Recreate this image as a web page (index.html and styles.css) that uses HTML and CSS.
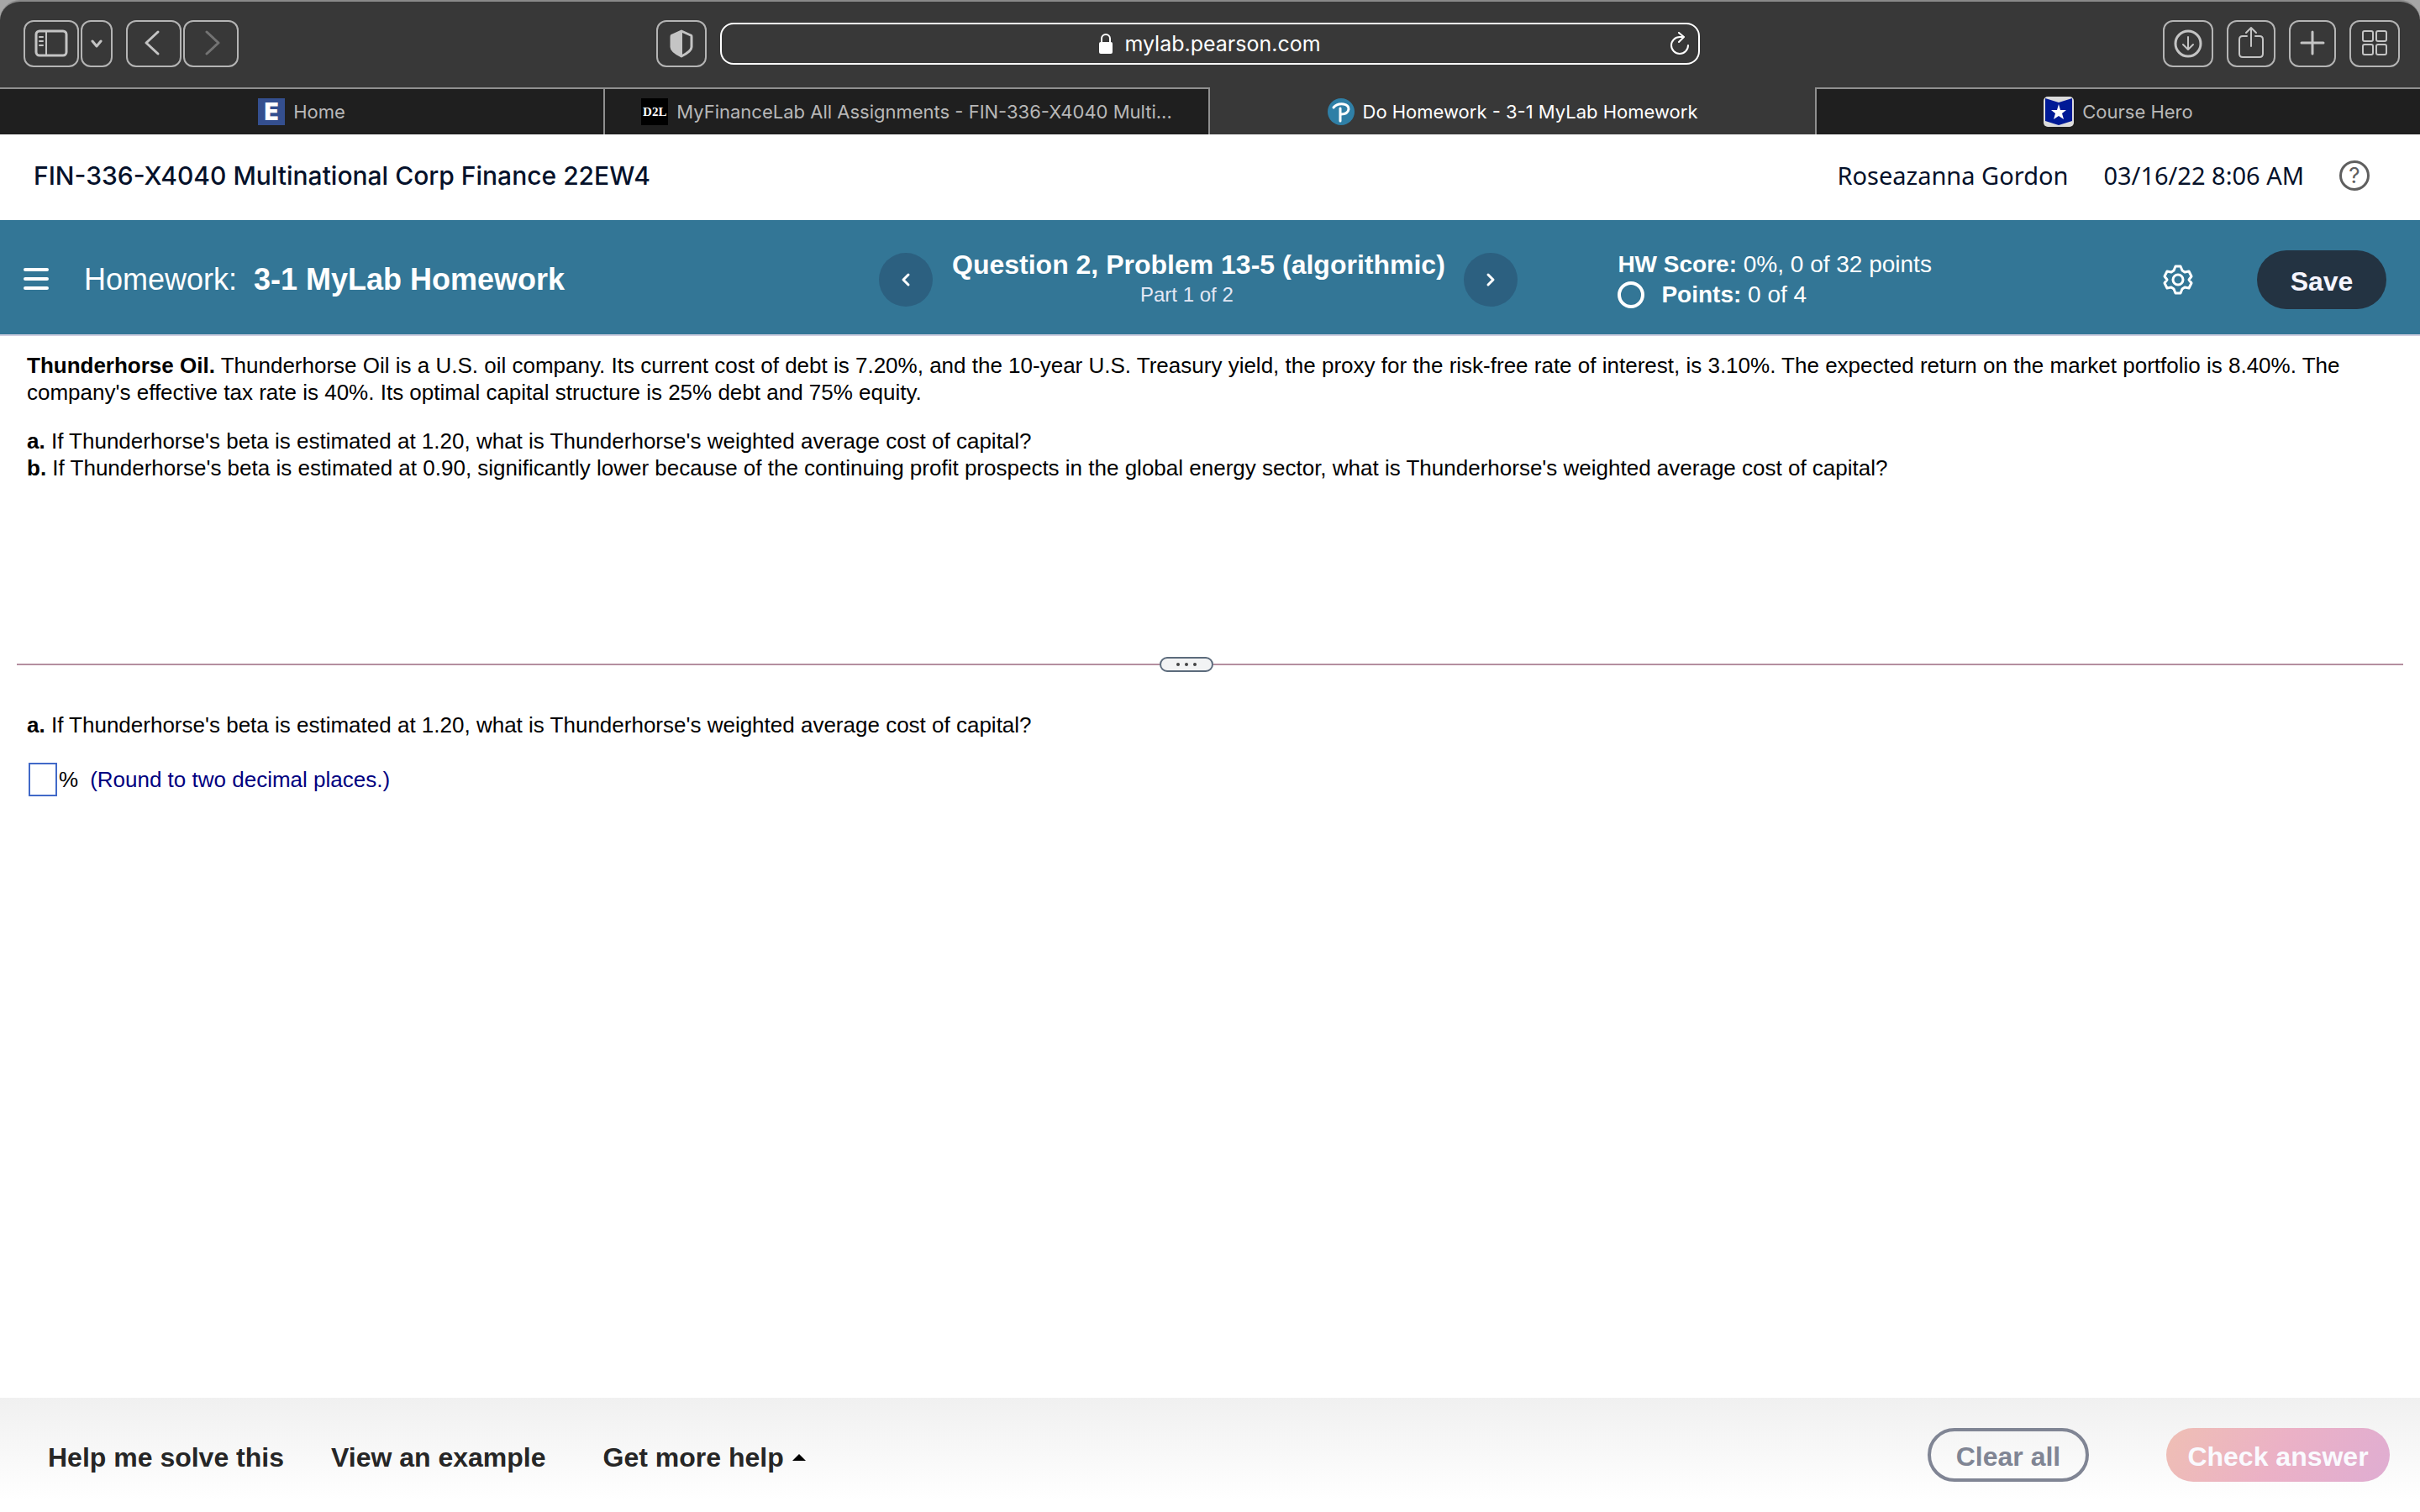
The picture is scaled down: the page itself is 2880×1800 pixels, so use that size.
FILE: index.html
```html
<!DOCTYPE html>
<html lang="en">
  <head>
    <meta charset="UTF-8" />
    <meta name="viewport" content="width=device-width, initial-scale=1.0" />
    <title>Do Homework - 3-1 MyLab Homework</title>
    <link rel="stylesheet" href="styles.css">
  </head>
  <body>
    <!-- Browser window -->
    <div class="browser">
      <div class="toolbar">
        <div class="toolbar-left">
          <div class="btn-pair">
            <button class="tool-btn" type="button" aria-label="Sidebar">
              <svg width="42" height="34" viewBox="0 0 42 34" fill="none" stroke="#c4c4c4" stroke-width="3">
                <rect x="3" y="2" width="36" height="29" rx="4" />
                <path d="M15 2v29" stroke-width="2" />
                <path d="M7 9h4M7 14h4M7 19h4" stroke-width="2" stroke-linecap="round" />
              </svg>
            </button>
            <button class="tool-btn" type="button" aria-label="Tab groups">
              <svg width="14" height="34" viewBox="0 0 14 34" fill="none" stroke="#c4c4c4" stroke-width="3" stroke-linecap="round" stroke-linejoin="round">
                <path d="M2 14l5 6l5-6" />
              </svg>
            </button>
          </div>
          <div class="btn-pair">
            <button class="tool-btn" type="button" aria-label="Back">
              <svg width="42" height="34" viewBox="0 0 42 34" fill="none" stroke="#c4c4c4" stroke-width="3" stroke-linecap="round" stroke-linejoin="round">
                <path d="M26 3L12 16l14 13" />
              </svg>
            </button>
            <button class="tool-btn" type="button" aria-label="Forward">
              <svg width="42" height="34" viewBox="0 0 42 34" fill="none" stroke="#737373" stroke-width="3" stroke-linecap="round" stroke-linejoin="round">
                <path d="M16 3l14 13l-14 13" />
              </svg>
            </button>
          </div>
          <button class="tool-btn shield" type="button" aria-label="Privacy report">
            <svg width="36" height="36" viewBox="0 0 36 36" fill="none" stroke="#c4c4c4" stroke-width="3" stroke-linejoin="round">
              <path d="M18 3l11 5q1 0 1 2v12q0 5-12 11q-12-6-12-11v-12q0-2 1-2z" />
              <path d="M18 3v30q-12-6-12-11v-12q0-2 1-2z" fill="#c4c4c4" stroke="none" />
              <path d="M18 3v30" stroke-width="2" />
            </svg>
          </button>
        </div>

        <div class="address">
          <div class="address-text">
            <svg width="16" height="26" viewBox="0 0 16 26" fill="none">
              <rect x="0" y="11" width="16" height="14" rx="2" fill="#fff" />
              <path d="M3 12V7a5 5 0 0 1 10 0v5" stroke="#fff" stroke-width="2" />
            </svg>
            <input class="address-input" type="text" value="mylab.pearson.com" aria-label="Address" />
          </div>
          <button class="reload" type="button" aria-label="Reload">
            <svg width="24" height="28" viewBox="0 0 24 28" fill="none" stroke="#fff" stroke-width="2" stroke-linecap="round" stroke-linejoin="round">
              <path d="M15 6h-3a10 10 0 1 0 10 10" />
              <path d="M11 1l6 5l-6 6" />
            </svg>
          </button>
        </div>

        <div class="toolbar-right">
          <button class="tool-btn" type="button" aria-label="Downloads">
            <svg width="36" height="36" viewBox="0 0 36 36" fill="none" stroke="#c4c4c4" stroke-linecap="round" stroke-linejoin="round">
              <circle cx="18" cy="18" r="15" stroke-width="3" />
              <path d="M18 10v15M12 19l6 6l6-6" stroke-width="2" />
            </svg>
          </button>
          <button class="tool-btn" type="button" aria-label="Share">
            <svg width="34" height="44" viewBox="0 0 34 44" fill="none" stroke="#c4c4c4" stroke-width="2" stroke-linecap="round" stroke-linejoin="round">
              <path d="M12 13H7q-4 0-4 4v17q0 4 4 4h20q4 0 4-4V17q0-4-4-4h-5" />
              <path d="M17 25V3M11 9l6-6l6 6" />
            </svg>
          </button>
          <button class="tool-btn" type="button" aria-label="New tab">
            <svg width="32" height="34" viewBox="0 0 32 34" fill="none" stroke="#c4c4c4" stroke-width="3" stroke-linecap="round">
              <path d="M16 3v26M3 16h26" />
            </svg>
          </button>
          <button class="tool-btn" type="button" aria-label="Tab overview">
            <svg width="36" height="36" viewBox="0 0 36 36" fill="none" stroke="#c4c4c4" stroke-width="2">
              <rect x="4" y="3" width="12" height="12" rx="2" />
              <rect x="20" y="3" width="12" height="12" rx="2" />
              <rect x="4" y="19" width="12" height="12" rx="2" />
              <rect x="20" y="19" width="12" height="12" rx="2" />
            </svg>
          </button>
        </div>
      </div>

      <nav class="tabs">
        <a class="tab" href="#"><span class="favicon favicon-e">E</span><span class="tab-title">Home</span></a>
        <a class="tab" href="#"><span class="favicon favicon-d2l">D2L</span><span class="tab-title">MyFinanceLab All Assignments - FIN-336-X4040 Multi...</span></a>
        <a class="tab active" href="#">
          <svg width="32" height="32" viewBox="0 0 32 32" fill="none" stroke="#fff" stroke-width="3" stroke-linecap="round">
            <circle cx="16" cy="16" r="16" fill="#2f7fa6" stroke="none" />
            <path d="M7 11q4-5 12-4q6 1 6 6q-1 6-9 6" />
            <path d="M15 12v15" />
          </svg>
          <span class="tab-title">Do Homework - 3-1 MyLab Homework</span>
        </a>
        <a class="tab" href="#">
          <svg width="36" height="36" viewBox="0 0 36 36">
            <rect width="36" height="36" rx="5" fill="#dcdcdc" />
            <path d="M2 2l16 5l16-5v27l-16 5l-16-5z" fill="#001a96" />
            <path d="M18 9l2 7h7l-5 4l2 7l-6-4l-6 4l2-7l-5-4h7z" fill="#fff" />
          </svg>
          <span class="tab-title">Course Hero</span>
        </a>
      </nav>
    </div>

    <!-- Course header -->
    <header class="course-header">
      <h1 class="course-name">FIN-336-X4040 Multinational Corp Finance 22EW4</h1>
      <div class="user-info">
        <span>Roseazanna Gordon</span>
        <span>03/16/22 8:06 AM</span>
        <button class="help-btn" type="button" aria-label="Help">?</button>
      </div>
    </header>

    <!-- Homework bar -->
    <div class="homework-bar">
      <div class="homework-title">
        <button class="menu-btn" type="button" aria-label="Menu">
          <svg width="30" height="28" viewBox="0 0 30 28" stroke="#fff" stroke-width="4" stroke-linecap="round">
            <path d="M2 2h26M2 13h26M2 24h26" />
          </svg>
        </button>
        <h2 class="homework-name">Homework: <b>3-1 MyLab Homework</b></h2>
      </div>

      <div class="question-nav">
        <button class="round-btn" type="button" aria-label="Previous question">
          <svg width="12" height="18" viewBox="0 0 12 18" fill="none" stroke="#fff" stroke-width="3" stroke-linecap="round" stroke-linejoin="round">
            <path d="M9 3L3 9l6 6" />
          </svg>
        </button>
        <div class="question-label">
          <b>Question 2, Problem 13-5 (algorithmic)</b>
          <span>Part 1 of 2</span>
        </div>
        <button class="round-btn" type="button" aria-label="Next question">
          <svg width="12" height="18" viewBox="0 0 12 18" fill="none" stroke="#fff" stroke-width="3" stroke-linecap="round" stroke-linejoin="round">
            <path d="M3 3l6 6l-6 6" />
          </svg>
        </button>
      </div>

      <div class="score-area">
        <div class="score">
          <div><b>HW Score:</b> 0%, 0 of 32 points</div>
          <div class="points"><span class="points-ring"></span><span><b>Points:</b> 0 of 4</span></div>
        </div>
        <button class="settings-btn" type="button" aria-label="Settings">
          <svg width="36" height="36" viewBox="0 0 36 36" fill="none" stroke="#fff" stroke-width="3" stroke-linejoin="round">
            <path d="M15 2h6l2 5l3 2l5-1l3 6l-3 4l3 4l-3 6l-5-1l-3 2l-2 5h-6l-2-5l-3-2l-5 1l-3-6l3-4l-3-4l3-6l5 1l3-2z" />
            <circle cx="18" cy="18" r="6" />
          </svg>
        </button>
        <button class="save-btn" type="button">Save</button>
      </div>
    </div>

    <main class="content">
      <section class="problem">
        <p><b>Thunderhorse Oil.</b> Thunderhorse Oil is a U.S. oil company. Its current cost of debt is 7.20%, and the 10-year U.S. Treasury yield, the proxy for the risk-free rate of interest, is 3.10%. The expected return on the market portfolio is 8.40%. The company's effective tax rate is 40%. Its optimal capital structure is 25% debt and 75% equity.</p>
        <p>
          <b>a.</b> If Thunderhorse's beta is estimated at 1.20, what is Thunderhorse's weighted average cost of capital?<br />
          <b>b.</b> If Thunderhorse's beta is estimated at 0.90, significantly lower because of the continuing profit prospects in the global energy sector, what is Thunderhorse's weighted average cost of capital?
        </p>
      </section>

      <div class="splitter">
        <button class="splitter-handle" type="button" aria-label="Resize">
          <svg width="24" height="4" viewBox="0 0 24 4" fill="#444">
            <circle cx="2" cy="2" r="2" />
            <circle cx="12" cy="2" r="2" />
            <circle cx="22" cy="2" r="2" />
          </svg>
        </button>
      </div>

      <section class="question">
        <p id="question-text"><b>a.</b> If Thunderhorse's beta is estimated at 1.20, what is Thunderhorse's weighted average cost of capital?</p>
        <div class="answer-row">
          <input class="answer-input" type="text" id="answer" aria-labelledby="question-text" />
          <label for="answer">%</label>
          <span class="hint">(Round to two decimal places.)</span>
        </div>
      </section>
    </main>

    <footer class="bottom-bar">
      <div class="help-links">
        <a href="#">Help me solve this</a>
        <a href="#">View an example</a>
        <button class="more-help" type="button">Get more help <span class="caret"></span></button>
      </div>
      <div class="actions">
        <button class="clear-btn" type="button">Clear all</button>
        <button class="check-btn" type="button">Check answer</button>
      </div>
    </footer>
  </body>
</html>
```

FILE: styles.css
```css
* {
  box-sizing: border-box;
}

body {
  margin: 0;
  min-height: 100vh;
  display: flex;
  flex-direction: column;
  background-color: white;
  color: black;
  font-family: "Liberation Sans", Arial, sans-serif;
  font-size: 26px;
  line-height: 32px;
}

button {
  font-family: inherit;
  padding: 0;
  border: none;
  background: none;
  cursor: pointer;
}

svg {
  display: block;
  flex-shrink: 0;
}

a {
  color: inherit;
  text-decoration: none;
}

/* Browser window */
.browser {
  background-color: #a6a6a6;
  font-family: Inter, sans-serif;
}

.toolbar {
  display: flex;
  align-items: center;
  gap: 16px;
  height: 104px;
  padding: 0 24px 2px;
  background-color: #383838;
  border-top: 2px solid #8a8a8a;
  border-radius: 24px 24px 0 0;
}

.toolbar-left,
.toolbar-right {
  flex: 1 1 200px;
  display: flex;
  align-items: center;
  gap: 16px;
}

.toolbar-left {
  padding-left: 4px;
}

.toolbar-right {
  justify-content: flex-end;
}

.btn-pair {
  display: flex;
  gap: 2px;
}

.tool-btn {
  display: flex;
  align-items: center;
  height: 56px;
  padding: 0 10px;
  border: 2px solid #b4b4b4;
  border-radius: 12px;
}

.shield {
  margin-left: auto;
}

.address {
  flex-shrink: 0;
  width: 41.2%;
  height: 50px;
  display: grid;
  grid-template-columns: 1fr auto 1fr;
  align-items: center;
  border: 2px solid white;
  border-radius: 16px;
}

.address-text {
  grid-column: 2;
  display: flex;
  align-items: center;
  gap: 14px;
}

.address-input {
  field-sizing: content;
  padding: 0;
  border: none;
  outline: none;
  background: none;
  color: white;
  font-family: Inter, sans-serif;
  font-size: 25px;
}

.reload {
  justify-self: end;
  margin-right: 10px;
}

.tabs {
  display: grid;
  grid-template-columns: repeat(4, 1fr);
}

.tab {
  display: flex;
  justify-content: center;
  align-items: center;
  gap: 10px;
  height: 56px;
  background-color: #1f1f1f;
  border-top: 2px solid #8f8f8f;
  border-right: 2px solid #8f8f8f;
  color: #b8b8b8;
  font-size: 22px;
}

.tab:last-child {
  border-right: none;
  border-left: 2px solid #8f8f8f;
}

.tab.active {
  background-color: #383838;
  border-top-color: #383838;
  border-right: none;
  color: white;
}

.favicon {
  width: 32px;
  height: 32px;
  line-height: 32px;
  text-align: center;
  color: white;
  font-weight: bold;
}

.favicon-e {
  background-color: #344f8f;
  font-size: 28px;
  font-weight: 900;
}

.favicon-d2l {
  background-color: black;
  font-family: "Liberation Serif", serif;
  font-size: 15px;
}

/* Course header */
.course-header {
  display: flex;
  justify-content: space-between;
  align-items: center;
  height: 102px;
  padding: 0 60px 4px 40px;
  color: #05112a;
}

.course-name {
  margin: 0;
  font-family: Inter, sans-serif;
  font-size: 30px;
  font-weight: 500;
}

.user-info {
  display: flex;
  align-items: center;
  gap: 42px;
  font-family: "Noto Sans", sans-serif;
  font-size: 29px;
}

.help-btn {
  width: 36px;
  height: 36px;
  border: 3px solid #5f5f5f;
  border-radius: 50%;
  color: #5f5f5f;
  font-family: Inter, sans-serif;
  font-size: 26px;
  line-height: 30px;
}

/* Homework bar */
.homework-bar {
  display: grid;
  grid-template-columns: 67fr 50fr 68fr;
  align-items: center;
  height: 138px;
  padding: 6px 40px 0 28px;
  background-color: #337696;
  border-bottom: 2px solid #cfcfe0;
  color: white;
}

.homework-title {
  display: flex;
  align-items: center;
  gap: 42px;
}

.homework-name {
  margin: 0;
  font-size: 36px;
  font-weight: normal;
}

.homework-name b {
  margin-left: 10px;
}

.question-nav {
  display: flex;
  justify-content: space-between;
  align-items: center;
}

.round-btn {
  display: flex;
  justify-content: center;
  align-items: center;
  width: 64px;
  height: 64px;
  border-radius: 50%;
  background-color: #2c6080;
}

.question-label {
  display: flex;
  flex-direction: column;
  align-items: center;
  gap: 4px;
}

.question-label b {
  font-size: 32px;
}

.question-label span {
  padding-right: 28px;
  font-size: 24px;
  color: #e4e8f5;
}

.score-area {
  display: flex;
  align-items: center;
  padding-left: 119px;
}

.score {
  flex: 1;
  display: flex;
  flex-direction: column;
  gap: 4px;
  font-size: 28px;
}

.points {
  display: flex;
  gap: 20px;
}

.points-ring {
  width: 32px;
  height: 32px;
  border: 4px solid white;
  border-radius: 50%;
}

.settings-btn {
  margin-right: 76px;
}

.save-btn {
  width: 154px;
  height: 70px;
  padding-top: 4px;
  border-radius: 35px;
  background-color: #233342;
  color: #f5f5ff;
  font-size: 32px;
  font-weight: bold;
}

/* Question content */
.content {
  flex: 1;
}

.content p {
  margin: 0 0 26px;
}

.problem {
  min-height: 382px;
  padding: 19px 32px 0;
}

.splitter {
  display: flex;
  align-items: center;
  margin: 0 20px;
}

.splitter::before,
.splitter::after {
  content: "";
  height: 2px;
  background-color: #b48fa0;
}

.splitter::before {
  flex: 24;
}

.splitter::after {
  flex: 25;
}

.splitter-handle {
  display: flex;
  justify-content: center;
  align-items: center;
  width: 64px;
  height: 18px;
  border: 2px solid #5c6b7c;
  border-radius: 9px;
  background-color: #f2f3f4;
}

.question {
  padding: 47px 32px;
}

.answer-row {
  display: flex;
  align-items: center;
  gap: 2px;
  padding: 3px 0 0 2px;
}

.answer-input {
  width: 34px;
  height: 40px;
  padding: 0 4px;
  border: 2px solid #4169c8;
  font-size: 26px;
}

.hint {
  margin-left: 12px;
  color: #000080;
}

/* Bottom bar */
.bottom-bar {
  display: flex;
  justify-content: space-between;
  align-items: center;
  height: 136px;
  padding: 0 36px 0 57px;
  background: linear-gradient(#f0f0f0, white 90%);
  font-size: 32px;
  font-weight: bold;
}

.help-links {
  display: flex;
  align-items: center;
  gap: 56px;
  padding-top: 6px;
  color: #262626;
}

.more-help {
  display: flex;
  align-items: center;
  gap: 10px;
  margin-left: 12px;
  color: inherit;
  font-size: 32px;
  font-weight: bold;
}

.caret {
  border: 8px solid transparent;
  border-top: none;
  border-bottom-color: black;
}

.actions {
  display: flex;
  gap: 92px;
}

.clear-btn,
.check-btn {
  height: 64px;
  padding-top: 4px;
  border-radius: 32px;
  font-size: 32px;
  font-weight: bold;
}

.clear-btn {
  width: 192px;
  border: 4px solid #808594;
  color: #808594;
}

.check-btn {
  width: 266px;
  background: linear-gradient(120deg, #efbfb4, #ebb1c6 50%, #dfadd2);
  color: #fafaff;
}
```
